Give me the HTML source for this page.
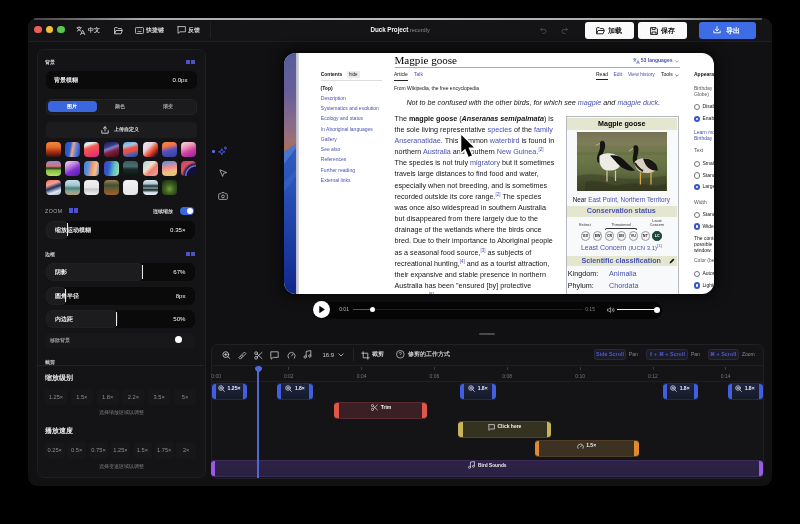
<!DOCTYPE html>
<html><head><meta charset="utf-8">
<style>
*{box-sizing:border-box;margin:0;padding:0}
html,body{width:800px;height:524px;overflow:hidden;background:#000;-webkit-font-smoothing:antialiased;font-family:"Liberation Sans",sans-serif;color:#e8e8ea}
.a{position:absolute}
#win{position:absolute;left:28px;top:18px;width:744px;height:468.3px;border-radius:9px;background:#111113;overflow:hidden}
#hl{position:absolute;left:6px;top:0;width:728px;height:1.5px;background:linear-gradient(90deg,#555 0%,#bbb 20%,#ccc 50%,#bbb 80%,#666 100%)}
#tb{position:absolute;left:0;top:0;width:744px;height:23px;background:#141416;border-bottom:1px solid #202023}
.dot{position:absolute;top:6.5px;width:9px;height:9px;border-radius:50%}
.tbt{position:absolute;top:6px;font-size:6.2px;font-weight:bold;color:#d4d4d8;line-height:10px;white-space:nowrap}
.btn{position:absolute;top:4px;height:16.5px;border-radius:3px;background:#fafafa;color:#111;font-size:7.5px;font-weight:bold;line-height:16.5px;text-align:center}
svg{display:block}
#lp{position:absolute;left:9px;top:31px;width:168px;height:428px;border-radius:9px;background:#151517;border:1px solid #1f1f22}
.lbl{position:absolute;font-size:5.4px;font-weight:bold;color:#d4d4d8;line-height:8px;white-space:nowrap}
.reset{position:absolute;width:9.2px;height:4.3px;background:linear-gradient(90deg,#4a55d0 0,#4a55d0 4px,transparent 4px,transparent 5.1px,#5050c8 5.1px)}
.sl{position:absolute;left:8.5px;width:151px;height:18px;border-radius:6px;background:#0a0a0b;overflow:hidden}
.slf{position:absolute;left:0;top:0;height:100%;background:#1c1c1e;border-radius:6px;box-shadow:inset 0 0 0 0.6px #252528}
.slh{position:absolute;top:2.2px;width:1.1px;height:13.5px;background:#ececec}
.slt{position:absolute;left:8.5px;top:5px;font-size:6.1px;font-weight:bold;color:#ececee;line-height:8px;white-space:nowrap}
.slv{position:absolute;right:9px;top:5px;font-size:6.1px;color:#f4f4f6;line-height:8px}
.tile{position:absolute;width:15px;height:15px;border-radius:4px}
.chip{position:absolute;height:16px;border-radius:3px;background:#171719;font-size:5.7px;color:#8e8e92;line-height:16px;text-align:center}
.w{position:absolute;font-size:5px;line-height:7px;white-space:nowrap}
.l{color:#4852b2}
sup{font-size:4.5px;vertical-align:3px;line-height:0}
.kb{position:absolute;top:349.4px;height:10.3px;border-radius:2.5px;background:#1b1c27;border:0.7px solid #292a36;font-size:5.4px;line-height:8.9px;color:#4d5ad0;font-weight:bold;text-align:center;white-space:nowrap}
.kt{position:absolute;top:350.6px;font-size:5px;line-height:7px;color:#8a8a8e}
</style></head><body><div style="position:absolute;left:0;top:0;width:800px;height:524px;will-change:transform">
<div id="win"></div>
<div class="a" style="left:28px;top:18px;width:744px;height:23px;border-radius:9px 9px 0 0;background:#141416"></div>
<div class="a" style="left:34px;top:18px;width:728px;height:1.5px;background:linear-gradient(90deg,#444 0%,#aaa 15%,#bbb 50%,#aaa 85%,#555 100%)"></div>
<div class="a" style="left:28px;top:40.5px;width:744px;height:1px;background:#1e1e21"></div>
<div class="dot" style="left:34.3px;top:25.5px;width:7.6px;height:7.6px;background:#ec5f5a"></div>
<div class="dot" style="left:45.8px;top:25.5px;width:7.6px;height:7.6px;background:#f3bf3b"></div>
<div class="dot" style="left:57.3px;top:25.5px;width:7.6px;height:7.6px;background:#5bc34f"></div>
<!-- translate icon -->
<svg class="a" style="left:76px;top:25.5px" width="10" height="10" viewBox="76 25.5 10 10" fill="none" stroke="#d4d4d8" stroke-width="0.8" stroke-linecap="round">
<path d="M76.9 27.2h4.4M79.1 26.2v1M77.6 27.9c.6 1.1 1.7 2.1 3.3 2.6M80.6 27.9c-.6 1.1-1.7 2.1-3.3 2.6"/><path d="M80.6 34.2l2.1-4.4 2.1 4.4M81.3 32.8h2.8"/></svg>
<div class="tbt" style="left:88px;top:24.6px">中文</div>
<svg class="a" style="left:113.5px;top:26.5px" width="9" height="8" viewBox="0 0 9 8" fill="none" stroke="#cfcfd3" stroke-width="0.9" stroke-linejoin="round">
<path d="M0.6 6.8V1.2c0-.3.2-.6.6-.6h2l1 1h3c.3 0 .6.2.6.6v1"/><path d="M0.6 6.8l1.4-3.3h6.4l-1.4 3.3z"/></svg>
<svg class="a" style="left:134.5px;top:26.5px" width="9" height="7" viewBox="0 0 9 7" fill="none" stroke="#cfcfd3" stroke-width="0.8">
<rect x="0.5" y="0.5" width="8" height="6" rx="0.8"/><path d="M2 2.2h.4M3.5 2.2h.4M5 2.2h.4M6.5 2.2h.4M2.5 4.6h4"/></svg>
<div class="tbt" style="left:146px;top:24.6px">快捷键</div>
<svg class="a" style="left:176.5px;top:26px" width="9" height="8" viewBox="0 0 9 8" fill="none" stroke="#cfcfd3" stroke-width="0.85" stroke-linejoin="round">
<path d="M0.6 0.6h7.8v5.2H3L1 7.4V0.6z"/></svg>
<div class="tbt" style="left:188px;top:24.6px">反馈</div>
<div class="a" style="left:209.7px;top:22px;width:0.7px;height:16px;background:#222225"></div>
<div class="a" style="left:370.4px;top:25.3px;font-size:6.3px;font-weight:bold;color:#f2f2f4;line-height:10px;letter-spacing:-0.05px">Duck Project<span style="font-weight:normal;color:#8a8a8e;font-size:5.6px;letter-spacing:0px">.recordly</span></div>
<svg class="a" style="left:540px;top:26.5px" width="7" height="7" viewBox="0 0 7 7" fill="none" stroke="#56565a" stroke-width="0.8"><path d="M2.2 0.8L0.6 2.4l1.6 1.6M0.6 2.4h3.4a2 2 0 0 1 0 4h-1.5"/></svg>
<svg class="a" style="left:560.5px;top:26.5px" width="7" height="7" viewBox="0 0 7 7" fill="none" stroke="#56565a" stroke-width="0.8"><path d="M4.8 0.8l1.6 1.6-1.6 1.6M6.4 2.4H3a2 2 0 0 0 0 4h1.5"/></svg>
<div class="btn" style="left:585px;top:22px;width:48.5px"></div>
<svg class="a" style="left:596px;top:26.5px" width="9" height="8" viewBox="0 0 9 8" fill="none" stroke="#111" stroke-width="0.9" stroke-linejoin="round">
<path d="M0.6 6.8V1.2c0-.3.2-.6.6-.6h2l1 1h3c.3 0 .6.2.6.6v1"/><path d="M0.6 6.8l1.4-3.3h6.4l-1.4 3.3z"/></svg>
<div class="a" style="left:608px;top:25.8px;font-size:7px;font-weight:bold;color:#111;line-height:10px">加载</div>
<div class="btn" style="left:637.5px;top:22px;width:49px"></div>
<svg class="a" style="left:649.5px;top:26.5px" width="8" height="8" viewBox="0 0 8 8" fill="none" stroke="#111" stroke-width="0.9" stroke-linejoin="round">
<path d="M0.6 0.6h5.4l1.4 1.4v5.4H0.6z"/><path d="M2.2 0.6v2h3v-2M2 7.4V5h4v2.4"/></svg>
<div class="a" style="left:661px;top:25.8px;font-size:7px;font-weight:bold;color:#111;line-height:10px">保存</div>
<div class="a" style="left:698.5px;top:22px;width:57px;height:16.5px;border-radius:3px;background:#3d6ce4"></div>
<svg class="a" style="left:713px;top:26px" width="8" height="8" viewBox="0 0 8 8" fill="none" stroke="#fff" stroke-width="0.9" stroke-linecap="round" stroke-linejoin="round">
<path d="M4 0.6v4.2M2.3 3.2L4 4.8l1.7-1.6M0.8 5v1.8h6.4V5"/></svg>
<div class="a" style="left:726px;top:25.8px;font-size:7px;font-weight:bold;color:#fff;line-height:10px">导出</div>

<!-- LEFT PANEL -->
<div class="a" style="left:36.5px;top:49px;width:169px;height:429px;border-radius:7px;background:#141416;border:1px solid #1e1e21"></div>
<div class="lbl" style="left:45px;top:58px">背景</div>
<div class="reset" style="left:185.9px;top:59.8px"></div>
<div class="sl" style="left:46px;top:71px;width:150.5px;height:18px"><div class="slt" style="left:8px">背景模糊</div><div class="slv">0.0px</div></div>
<div class="a" style="left:45.5px;top:98.5px;width:151px;height:16px;border-radius:5px;background:#1b1b1e;border:1px solid #232326"></div>
<div class="a" style="left:48px;top:101px;width:48.5px;height:11px;border-radius:4px;background:#3b67de;font-size:5.2px;font-weight:bold;color:#fff;text-align:center;line-height:11px">图片</div>
<div class="a" style="left:98px;top:101px;width:44px;height:11px;font-size:5.2px;font-weight:bold;color:#a9a9ad;text-align:center;line-height:11px">颜色</div>
<div class="a" style="left:144px;top:101px;width:48px;height:11px;font-size:5.2px;font-weight:bold;color:#a9a9ad;text-align:center;line-height:11px">渐变</div>
<div class="a" style="left:45.5px;top:122px;width:151px;height:15.5px;border-radius:4px;background:#1c1c1f"></div>
<svg class="a" style="left:101px;top:125.5px" width="8" height="8" viewBox="0 0 8 8" fill="none" stroke="#e0e0e3" stroke-width="0.85" stroke-linecap="round" stroke-linejoin="round"><path d="M4 5V0.8M2.3 2.4L4 0.8l1.7 1.6M0.8 4.6v2.6h6.4V4.6"/></svg>
<div class="a" style="left:113.5px;top:125.3px;font-size:5.1px;font-weight:bold;color:#e6e6e8;line-height:8px">上传自定义</div>
<div class="tile" style="left:45.5px;top:141.5px;background:linear-gradient(180deg,#f08a40 0%,#e86a28 35%,#a83018 65%,#3a1010 100%)"></div>
<div class="tile" style="left:64.9px;top:141.5px;background:linear-gradient(100deg,#2a50c8 0%,#3060d0 35%,#f0a878 50%,#6080e0 70%,#2040b0 100%)"></div>
<div class="tile" style="left:84.3px;top:141.5px;background:linear-gradient(160deg,#90d0f0 0%,#f0f0f0 18%,#f05a50 38%,#f04060 65%,#d02890 100%)"></div>
<div class="tile" style="left:103.7px;top:141.5px;background:linear-gradient(160deg,#18184a 0%,#3a3a8a 30%,#8080c0 42%,#802040 60%,#400818 100%)"></div>
<div class="tile" style="left:123.1px;top:141.5px;background:linear-gradient(165deg,#60a8e8 0%,#a0c8e8 25%,#f05040 45%,#e05050 60%,#4060b0 80%,#304090 100%)"></div>
<div class="tile" style="left:142.5px;top:141.5px;background:linear-gradient(135deg,#f0e8f0 0%,#e8d0e0 35%,#f06040 55%,#c03020 70%,#101030 92%)"></div>
<div class="tile" style="left:161.9px;top:141.5px;background:linear-gradient(165deg,#f09040 0%,#f07050 30%,#5050c0 55%,#3040a0 100%)"></div>
<div class="tile" style="left:181.3px;top:141.5px;background:linear-gradient(155deg,#f8e0e8 0%,#f0a0c0 30%,#d040a0 60%,#9020a0 100%)"></div>
<div class="tile" style="left:45.5px;top:160.7px;background:linear-gradient(180deg,#8090e8 0%,#e07070 35%,#204020 48%,#80c040 62%,#c0e060 100%)"></div>
<div class="tile" style="left:64.9px;top:160.7px;background:linear-gradient(150deg,#f0e0f0 0%,#c080e0 35%,#8030d0 60%,#5020a0 100%)"></div>
<div class="tile" style="left:84.3px;top:160.7px;background:linear-gradient(100deg,#4080e0 0%,#6090d8 30%,#f0a070 55%,#f0c090 75%,#6080d0 100%)"></div>
<div class="tile" style="left:103.7px;top:160.7px;background:linear-gradient(100deg,#4040c0 0%,#3060d0 35%,#60c0c0 65%,#a0e0b0 100%)"></div>
<div class="tile" style="left:123.1px;top:160.7px;background:linear-gradient(180deg,#3a5a60 0%,#4a7070 35%,#1a2a28 55%,#0a1410 100%)"></div>
<div class="tile" style="left:142.5px;top:160.7px;background:linear-gradient(135deg,#a0d8e0 0%,#f0e0d0 40%,#f08070 60%,#f0a0b0 100%)"></div>
<div class="tile" style="left:161.9px;top:160.7px;background:linear-gradient(170deg,#5090e0 0%,#f09090 45%,#f0c080 70%,#e0c070 100%)"></div>
<div class="tile" style="left:181.3px;top:160.7px;background:radial-gradient(circle at 100% 100%,#10103a 42%,#8080e0 48%,#20205a 54%,#e05060 68%,#c04060 100%)"></div>
<div class="tile" style="left:45.5px;top:179.9px;background:linear-gradient(160deg,#f07860 0%,#f0a090 30%,#203060 50%,#e0e8f0 75%,#a0b0d0 100%)"></div>
<div class="tile" style="left:64.9px;top:179.9px;background:linear-gradient(180deg,#c8e0f0 0%,#a0c8d0 35%,#508080 55%,#80a890 75%,#c0a080 100%)"></div>
<div class="tile" style="left:84.3px;top:179.9px;background:linear-gradient(180deg,#f0f0f2 0%,#e8e8ea 50%,#c8c8cc 60%,#f0f0f2 100%)"></div>
<div class="tile" style="left:103.7px;top:179.9px;background:linear-gradient(180deg,#a08060 0%,#405030 35%,#6a5a30 60%,#a06030 100%)"></div>
<div class="tile" style="left:123.1px;top:179.9px;background:linear-gradient(180deg,#f2f2f4 0%,#e4e4e6 100%)"></div>
<div class="tile" style="left:142.5px;top:179.9px;background:linear-gradient(180deg,#e0e8f0 0%,#b0c8d8 25%,#203030 40%,#80a0a0 55%,#102020 65%,#e0e8f0 85%)"></div>
<div class="tile" style="left:161.9px;top:179.9px;background:radial-gradient(circle at 50% 60%,#70a040 0%,#406020 40%,#1a3010 90%)"></div>

<div class="a" style="left:45px;top:206.5px;font-size:5.2px;color:#a9a9ad;letter-spacing:0.5px;line-height:8px">ZOOM</div>
<div class="reset" style="left:68.5px;top:208.3px"></div>
<div class="lbl" style="left:153px;top:206.5px">连续缩放</div>
<div class="a" style="left:179.5px;top:206.5px;width:14px;height:8px;border-radius:4px;background:#3b67de"></div>
<div class="a" style="left:186.5px;top:207.5px;width:6px;height:6px;border-radius:50%;background:#fff"></div>
<div class="sl" style="left:46px;top:220.5px;width:148.5px;height:18px"><div class="slf" style="width:22.5px"></div><div class="slh" style="left:21px"></div><div class="slt">缩放运动模糊</div><div class="slv">0.35×</div></div>
<div class="lbl" style="left:45px;top:249.5px">边框</div>
<div class="reset" style="left:185.9px;top:251.5px"></div>
<div class="sl" style="left:46px;top:263px;width:148.5px;height:18px"><div class="slf" style="width:97px"></div><div class="slh" style="left:95.9px"></div><div class="slt">阴影</div><div class="slv">67%</div></div>
<div class="sl" style="left:46px;top:286.5px;width:148.5px;height:18px"><div class="slf" style="width:21px"></div><div class="slh" style="left:19px"></div><div class="slt">圆角半径</div><div class="slv">8px</div></div>
<div class="sl" style="left:46px;top:310px;width:148.5px;height:17.5px"><div class="slf" style="width:72px"></div><div class="slh" style="left:70.3px"></div><div class="slt">内边距</div><div class="slv">50%</div></div>
<div class="a" style="left:44.5px;top:332.5px;width:150px;height:15.5px;border-radius:5px;background:#18181a"></div>
<div class="a" style="left:50px;top:336px;font-size:5.2px;font-weight:bold;color:#9a9a9e;line-height:8px">移除背景</div>
<div class="a" style="left:175px;top:336px;width:7px;height:7px;border-radius:50%;background:#fff"></div>
<div class="a" style="left:45px;top:357.5px;font-size:5.4px;font-weight:bold;color:#c4c4c8;line-height:8px">截剪</div>
<div class="a" style="left:37px;top:365px;width:168px;height:1px;background:#232326"></div>
<div class="a" style="left:45px;top:371.5px;font-size:7.2px;font-weight:bold;color:#eaeaec;line-height:11px">缩放级别</div>
<div class="chip" style="left:45.0px;top:389px;width:22px">1.25×</div>
<div class="chip" style="left:70.8px;top:389px;width:22px">1.5×</div>
<div class="chip" style="left:96.6px;top:389px;width:22px">1.8×</div>
<div class="chip" style="left:122.4px;top:389px;width:22px">2.2×</div>
<div class="chip" style="left:148.2px;top:389px;width:22px">3.5×</div>
<div class="chip" style="left:174.0px;top:389px;width:22px">5×</div>

<div class="a" style="left:37px;top:408.3px;width:168px;text-align:center;font-size:5.2px;color:#808084;line-height:8px">选择缩放区域以调整</div>
<div class="a" style="left:45px;top:424.5px;font-size:7.2px;font-weight:bold;color:#eaeaec;line-height:11px">播放速度</div>
<div class="chip" style="left:45.0px;top:441.5px;width:19.5px">0.25×</div>
<div class="chip" style="left:66.9px;top:441.5px;width:19.5px">0.5×</div>
<div class="chip" style="left:88.8px;top:441.5px;width:19.5px">0.75×</div>
<div class="chip" style="left:110.7px;top:441.5px;width:19.5px">1.25×</div>
<div class="chip" style="left:132.6px;top:441.5px;width:19.5px">1.5×</div>
<div class="chip" style="left:154.5px;top:441.5px;width:19.5px">1.75×</div>
<div class="chip" style="left:176.4px;top:441.5px;width:19.5px">2×</div>

<div class="a" style="left:37px;top:461.5px;width:168px;text-align:center;font-size:5.2px;color:#808084;line-height:8px">选择变速区域以调整</div>


<!-- TOOLS -->
<div class="a" style="left:212px;top:150.2px;width:2.5px;height:2.5px;border-radius:50%;background:#5a6ae8"></div>
<svg class="a" style="left:218px;top:146.3px" width="10" height="10" viewBox="0 0 10 10" fill="none" stroke="#4a5ce6" stroke-width="0.85" stroke-linejoin="round"><path d="M3.8 2.6L4.6 5 7 5.8 4.6 6.6 3.8 9 3 6.6 .6 5.8 3 5z"/><path d="M7.4 .6l.35 1.05 1.05.35-1.05.35L7.4 3.4l-.35-1.05L6 2l1.05-.35z"/></svg>
<svg class="a" style="left:218.5px;top:169.3px" width="9" height="8" viewBox="0 0 9 8" fill="none" stroke="#bdbdc1" stroke-width="0.8" stroke-linejoin="round"><path d="M.8 .8L7.8 3.6 4.6 4.4 3.6 7.4z"/></svg>
<svg class="a" style="left:217.8px;top:191.8px" width="10" height="8" viewBox="0 0 10 8" fill="none" stroke="#bdbdc1" stroke-width="0.8" stroke-linejoin="round"><path d="M.7 2.4c0-.4.3-.7.7-.7h1.5L3.8.6h2.4l.9 1.1h1.5c.4 0 .7.3.7.7v4.3c0 .4-.3.7-.7.7H1.4c-.4 0-.7-.3-.7-.7z"/><circle cx="5" cy="4.4" r="1.4"/></svg>
<!-- PREVIEW -->
<div class="a" style="left:284px;top:52.6px;width:430px;height:241.5px;border-radius:12px;overflow:hidden;background:#fff;box-shadow:0 0 12px 4px rgba(0,0,0,0.55)">
<div class="a" style="left:-284px;top:-52.6px;width:800px;height:524px">
<svg class="a" style="left:284px;top:52px" width="12" height="242" viewBox="0 0 12 242">
<defs><linearGradient id="g1" x1="0" y1="0" x2="0" y2="1"><stop offset="0" stop-color="#565c9e"/><stop offset="0.4" stop-color="#685e98"/><stop offset="0.7" stop-color="#866a8a"/><stop offset="0.88" stop-color="#9c7074"/><stop offset="1" stop-color="#ac6e50"/></linearGradient>
<linearGradient id="g2" x1="0" y1="0" x2="0" y2="1"><stop offset="0" stop-color="#3d74d6"/><stop offset="0.25" stop-color="#3466cc"/><stop offset="0.55" stop-color="#2a52b8"/><stop offset="1" stop-color="#10288c"/></linearGradient></defs>
<rect width="12" height="242" fill="url(#g2)"/>
<path d="M0 0H12V92L0 100z" fill="url(#g1)"/>
<path d="M0 100L12 92V96L0 112z" fill="#5a88d8" opacity="0.6"/><path d="M0 130L12 118V124L0 140z" fill="#3a6ac8" opacity="0.5"/>
</svg>
<div class="a" style="left:295.7px;top:52px;width:3px;height:242px;background:linear-gradient(90deg,#b8b8c4,#dcdce4)"></div>
<div class="w" style="left:320.7px;top:70.5px;font-weight:bold;color:#141516">Contents</div>
<div class="a" style="left:347px;top:70.7px;width:13px;height:7.3px;background:#eaecf0;border-radius:1px"></div>
<div class="w" style="left:349px;top:70.5px;color:#141516;font-size:4.5px">hide</div>
<div class="a" style="left:321px;top:80px;width:60.5px;height:0.6px;background:#dcdde0"></div>
<div class="w" style="left:320.5px;top:84.6px;font-weight:bold;color:#141516">(Top)</div>
<div class="w" style="left:320.8px;top:94.8px;color:#4852b2">Description</div>
<div class="w" style="left:320.8px;top:105.0px;color:#4852b2">Systematics and evolution</div>
<div class="w" style="left:320.8px;top:115.2px;color:#4852b2">Ecology and status</div>
<div class="w" style="left:320.8px;top:125.7px;color:#4852b2">In Aboriginal languages</div>
<div class="w" style="left:320.8px;top:135.9px;color:#4852b2">Gallery</div>
<div class="w" style="left:320.8px;top:146.1px;color:#4852b2">See also</div>
<div class="w" style="left:320.8px;top:156.3px;color:#4852b2">References</div>
<div class="w" style="left:320.8px;top:166.5px;color:#4852b2">Further reading</div>
<div class="w" style="left:320.8px;top:176.7px;color:#4852b2">External links</div>

<div class="a" style="left:394.5px;top:53.5px;font-family:'Liberation Serif',serif;font-size:11.1px;line-height:13px;color:#000;white-space:nowrap">Magpie goose</div>
<div class="a" style="left:394.5px;top:67px;width:285px;height:0.7px;background:#a2a9b1"></div>
<svg class="a" style="left:632.5px;top:58px" width="7" height="6" viewBox="0 0 7 6" fill="none" stroke="#4852b2" stroke-width="0.6"><path d="M0.3 1h3M1.8 .2v.8M.8 1c.3 1.2 1 2 2.3 2.4M2.8 1c-.3 1.2-1 2-2.3 2.4M3.5 5.8l1.5-3.3 1.5 3.3M4 4.8h2"/></svg>
<div class="w" style="left:640.8px;top:57.3px;font-weight:bold;color:#4852b2">53 languages</div>
<svg class="a" style="left:675px;top:59.5px" width="4" height="3" viewBox="0 0 4 3" fill="none" stroke="#4852b2" stroke-width="0.6"><path d="M.4 .6L2 2.2 3.6 .6"/></svg>
<div class="w" style="left:394px;top:71.3px;color:#141516">Article</div>
<div class="a" style="left:394px;top:79.7px;width:14px;height:1px;background:#202122"></div>
<div class="w" style="left:414px;top:71.3px;color:#4852b2">Talk</div>
<div class="w" style="left:596px;top:71.2px;color:#141516">Read</div>
<div class="a" style="left:596px;top:79.3px;width:12px;height:1px;background:#202122"></div>
<div class="w" style="left:613.5px;top:71.2px;color:#4852b2">Edit</div>
<div class="w" style="left:628px;top:71.2px;color:#4852b2">View history</div>
<div class="w" style="left:661px;top:71.2px;color:#141516">Tools</div>
<svg class="a" style="left:675px;top:73.5px" width="4" height="3" viewBox="0 0 4 3" fill="none" stroke="#202122" stroke-width="0.6"><path d="M.4 .6L2 2.2 3.6 .6"/></svg>
<div class="w" style="left:394px;top:84.8px;color:#141516">From Wikipedia, the free encyclopedia</div>
<div class="a" style="left:406.4px;top:98.3px;font-size:7.2px;line-height:10px;font-style:italic;color:#141516;white-space:nowrap">Not to be confused with the other birds, for which see <span style="color:#4852b2">magpie</span> and <span style="color:#4852b2">magpie duck</span>.</div>
<div class="a" style="left:394.5px;top:112.7px;font-size:7.2px;line-height:11.15px;color:#141516;white-space:nowrap">
The <b>magpie goose</b> (<b><i>Anseranas semipalmata</i></b>) is<br>
the sole living representative <span class="l">species</span> of the <span class="l">family</span><br>
<span class="l">Anseranatidae</span>. This common <span class="l">waterbird</span> is found in<br>
northern <span class="l">Australia</span> and southern <span class="l">New Guinea</span>.<sup class="l">[2]</sup><br>
The species is not truly <span class="l">migratory</span> but it sometimes<br>
travels large distances to find food and water,<br>
especially when not breeding, and is sometimes<br>
recorded outside its core range.<sup class="l">[2]</sup> The species<br>
was once also widespread in southern Australia<br>
but disappeared from there largely due to the<br>
drainage of the wetlands where the birds once<br>
bred. Due to their importance to Aboriginal people<br>
as a seasonal food source,<sup class="l">[3]</sup> as subjects of<br>
recreational hunting,<sup class="l">[4]</sup> and as a tourist attraction,<br>
their expansive and stable presence in northern<br>
Australia has been "ensured [by] protective<br>
legislation"<sup class="l">[5]</sup>
</div>
<!-- infobox -->
<div class="a" style="left:565.5px;top:116.4px;width:113px;height:190px;background:#f8f9fa;border:0.7px solid #b4b9c0"></div>
<div class="a" style="left:567px;top:117.8px;width:109.5px;height:12.2px;background:#e5e6cf"></div>
<div class="a" style="left:567px;top:119.3px;width:109.5px;text-align:center;font-size:7.1px;font-weight:bold;color:#000;line-height:10px">Magpie goose</div>
<div class="a" style="left:577.3px;top:131.7px;width:89.5px;height:59.4px;background:linear-gradient(180deg,#757254 0%,#7c7a58 12%,#74784e 30%,#6a7646 50%,#606c40 68%,#4e5634 85%,#3e4428 100%);overflow:hidden">
<svg width="89.5" height="59.4" viewBox="0 0 89.5 59.4">
<rect x="0" y="10" width="89.5" height="4" fill="#86805e" opacity="0.5"/>
<rect x="0" y="20" width="89.5" height="3" fill="#5e6a40" opacity="0.4"/>
<path d="M0 44c10-3 25-2 35 1s30 2 54-1v15.4H0z" fill="#3c4226" opacity="0.55"/>
<path d="M8 50c6-2 14-1 20 1s10 3 16 2 14-3 22-1 14 2 23 0v7.4H8z" fill="#30331e" opacity="0.6"/>
<path d="M18.7 13.4L23 11.5" stroke="#c8b080" stroke-width="1"/>
<path d="M23 10.5c1.2-2.5 4-2.3 4.8.3 .8 3 .2 6-1.2 9-1.5 3.5-2.5 6-1.8 8.5l-3.6 3c-1.8-3-1.5-7 .3-10.5 1.3-2.6 1.8-5 1.5-10.3z" fill="#151515"/>
<path d="M22.5 24c3-3 9-3.5 14-2 5 1.5 8 5 7 10.5-1 4.5-7 6.5-13 6-5-.5-9-4.5-8-14.5z" fill="#ecece4"/>
<path d="M33 23.5c5-1 10 .5 14 4.5 4 4 8 7.5 11.2 10.7-4.5.6-9-.5-13-3-3.5-2-6-6-12.2-12.2z" fill="#121212"/>
<path d="M30 38.5v11M38.5 38.5v10.5" stroke="#d8c8a0" stroke-width="1.2"/>
<path d="M52 19.4L56.5 16" stroke="#c8b080" stroke-width="1"/>
<path d="M56.3 15c1-2.3 4-2.3 4.8 0 .7 2.5 .3 5-.5 8-.7 3-.8 5-.3 7.5l-3.5 1.5c-1.3-3-1.3-6-.5-9.5 .6-2.5 .5-4.7 0-7.5z" fill="#151515"/>
<path d="M57.5 30c2-3.5 8-4.5 13-3.5 5 1 8.5 4 9 8.5.5 4-4 6-10 6-6 0-12-3-12-11z" fill="#d8d0c0"/>
<path d="M66 26.5c5-.5 10 1.5 12.5 5 1.5 2 2 4.5 2.5 7-3.5.5-7-.5-9.5-2.5-2.5-2-4-5-5.5-9.5z" fill="#1a1714"/>
<path d="M58 31c1.5 3 4 6 8 8" stroke="#2a2420" stroke-width="2"/>
<path d="M63.4 40.5v12M74 40v12.5" stroke="#e0a848" stroke-width="1.3"/>
</svg></div>
<div class="a" style="left:567px;top:194.5px;width:108.5px;text-align:center;font-size:6.35px;color:#141516;line-height:9px;white-space:nowrap">Near <span class="l">East Point, Northern Territory</span></div>
<div class="a" style="left:567px;top:206px;width:109.5px;height:10.6px;background:#e5e6cf"></div>
<div class="a" style="left:567px;top:206.3px;width:108.5px;text-align:center;font-size:7.2px;font-weight:bold;color:#4852b2;line-height:10px">Conservation status</div>
<div class="a" style="left:581.0px;top:231.4px;width:9.4px;height:9.4px;border-radius:50%;background:#f4f4f4;border:0.6px solid #9a9a9a;color:#222;font-weight:bold;font-size:3.6px;line-height:8.2px;text-align:center">EX</div>
<div class="a" style="left:592.9px;top:231.4px;width:9.4px;height:9.4px;border-radius:50%;background:#f4f4f4;border:0.6px solid #9a9a9a;color:#222;font-weight:bold;font-size:3.6px;line-height:8.2px;text-align:center">EW</div>
<div class="a" style="left:604.8px;top:231.4px;width:9.4px;height:9.4px;border-radius:50%;background:#f4f4f4;border:0.6px solid #9a9a9a;color:#222;font-weight:bold;font-size:3.6px;line-height:8.2px;text-align:center">CR</div>
<div class="a" style="left:616.7px;top:231.4px;width:9.4px;height:9.4px;border-radius:50%;background:#f4f4f4;border:0.6px solid #9a9a9a;color:#222;font-weight:bold;font-size:3.6px;line-height:8.2px;text-align:center">EN</div>
<div class="a" style="left:628.6px;top:231.4px;width:9.4px;height:9.4px;border-radius:50%;background:#f4f4f4;border:0.6px solid #9a9a9a;color:#222;font-weight:bold;font-size:3.6px;line-height:8.2px;text-align:center">VU</div>
<div class="a" style="left:640.5px;top:231.4px;width:9.4px;height:9.4px;border-radius:50%;background:#f4f4f4;border:0.6px solid #9a9a9a;color:#222;font-weight:bold;font-size:3.6px;line-height:8.2px;text-align:center">NT</div>
<div class="a" style="left:652.4px;top:231.4px;width:9.4px;height:9.4px;border-radius:50%;background:#1e4a40;border:0.6px solid #0a3a30;color:#fff;font-weight:bold;font-size:3.6px;line-height:8.2px;text-align:center">LC</div>
<div class="a" style="left:575px;top:222.5px;width:20px;text-align:center;font-size:3.8px;color:#333;line-height:4px">Extinct</div><div class="a" style="left:605px;top:222.5px;width:32px;text-align:center;font-size:3.8px;color:#333;line-height:4px">Threatened</div><div class="a" style="left:647px;top:220px;width:20px;text-align:center;font-size:3.8px;color:#333;line-height:3.8px">Least<br>Concern</div><div class="a" style="left:605px;top:227.5px;width:32px;height:2px;border:0.6px solid #333;border-bottom:none;border-radius:2px 2px 0 0"></div>
<div class="a" style="left:567px;top:243px;width:108.5px;text-align:center;font-size:7px;color:#4852b2;line-height:10px;white-space:nowrap">Least Concern <span style="font-size:6px">(IUCN 3.1)</span><sup style="font-size:4px">[1]</sup></div>
<div class="a" style="left:567px;top:255.7px;width:109.5px;height:10.7px;background:#e5e6cf"></div>
<div class="a" style="left:567px;top:256px;width:108.5px;text-align:center;font-size:7.2px;font-weight:bold;color:#4852b2;line-height:10px;padding-right:0px">Scientific classification</div>
<svg class="a" style="left:668.5px;top:257.5px" width="6" height="6" viewBox="0 0 6 6"><path d="M.6 5.4l.4-1.6 3.2-3.2 1.2 1.2-3.2 3.2z" fill="#111"/></svg>
<div class="a" style="left:567.8px;top:268.6px;font-size:7.2px;color:#141516;line-height:10px">Kingdom:</div>
<div class="a" style="left:609px;top:268.6px;font-size:7.2px;color:#4852b2;line-height:10px">Animalia</div>
<div class="a" style="left:567.8px;top:280.7px;font-size:7.2px;color:#141516;line-height:10px">Phylum:</div>
<div class="a" style="left:609px;top:280.7px;font-size:7.2px;color:#4852b2;line-height:10px">Chordata</div>
<div class="w" style="left:694px;top:70.5px;font-weight:bold;color:#141516">Appearance</div>
<div class="a" style="left:694px;top:84.5px;font-size:5px;line-height:6px;color:#54595d">Birthday<br>Globe)</div>
<div class="a" style="left:694px;top:129px;font-size:5px;line-height:6px;color:#4852b2">Learn more<br>Birthday</div>
<div class="w" style="left:694px;top:146.5px;color:#54595d">Text</div>
<div class="w" style="left:694px;top:198.5px;color:#54595d">Width</div>
<div class="a" style="left:694px;top:235px;font-size:5px;line-height:6px;color:#141516">The content<br>possible<br>window.</div>
<div class="w" style="left:694px;top:256.5px;color:#54595d">Color (beta)</div>
<div class="a" style="left:694px;top:103.8px;width:6.4px;height:6.4px;border-radius:50%;border:0.7px solid #72777d;background:#fff"></div><div class="w" style="left:702.5px;top:103.4px;color:#141516">Disabled</div><div class="a" style="left:694px;top:115.8px;width:6.4px;height:6.4px;border-radius:50%;border:2.1px solid #3a56c8;background:#fff"></div><div class="w" style="left:702.5px;top:115.4px;color:#141516">Enabled</div><div class="a" style="left:694px;top:160.8px;width:6.4px;height:6.4px;border-radius:50%;border:0.7px solid #72777d;background:#fff"></div><div class="w" style="left:702.5px;top:160.4px;color:#141516">Small</div><div class="a" style="left:694px;top:172.3px;width:6.4px;height:6.4px;border-radius:50%;border:0.7px solid #72777d;background:#fff"></div><div class="w" style="left:702.5px;top:171.9px;color:#141516">Standard</div><div class="a" style="left:694px;top:183.8px;width:6.4px;height:6.4px;border-radius:50%;border:2.1px solid #3a56c8;background:#fff"></div><div class="w" style="left:702.5px;top:183.4px;color:#141516">Large</div><div class="a" style="left:694px;top:211.8px;width:6.4px;height:6.4px;border-radius:50%;border:0.7px solid #72777d;background:#fff"></div><div class="w" style="left:702.5px;top:211.4px;color:#141516">Standard</div><div class="a" style="left:694px;top:223.3px;width:6.4px;height:6.4px;border-radius:50%;border:2.1px solid #3a56c8;background:#fff"></div><div class="w" style="left:702.5px;top:222.9px;color:#141516">Wide</div><div class="a" style="left:694px;top:270.8px;width:6.4px;height:6.4px;border-radius:50%;border:0.7px solid #72777d;background:#fff"></div><div class="w" style="left:702.5px;top:270.4px;color:#141516">Automatic</div><div class="a" style="left:694px;top:282.3px;width:6.4px;height:6.4px;border-radius:50%;border:2.1px solid #3a56c8;background:#fff"></div><div class="w" style="left:702.5px;top:281.9px;color:#141516">Light</div>
<svg class="a" style="left:457px;top:131px" width="21" height="30" viewBox="457 131 21 30"><path d="M461.3 134.9L461.3 152.3L465.2 148.7L468.6 156.8L471.9 155.4L468.5 147.6L474 147.6Z" fill="#000" stroke="#fff" stroke-width="2.6" stroke-linejoin="round" paint-order="stroke"/></svg>
</div></div>

<!-- PLAYER -->
<div class="a" style="left:311.5px;top:301.5px;width:350.5px;height:17px;border-radius:8.5px;background:#050505"></div>
<div class="a" style="left:313.3px;top:301.3px;width:16.8px;height:16.8px;border-radius:50%;background:#fff"></div>
<svg class="a" style="left:317px;top:305px" width="9" height="9" viewBox="0 0 9 9"><path d="M2.6 1.3L7.4 4.5 2.6 7.7z" fill="#000" stroke="#000" stroke-width="0.6" stroke-linejoin="round"/></svg>
<div class="a" style="left:339.2px;top:306px;font-size:5px;line-height:7px;color:#bdbdc0">0:01</div>
<div class="a" style="left:352.7px;top:309px;width:230px;height:1px;background:#1e1e20"></div>
<div class="a" style="left:352.7px;top:308.8px;width:20px;height:1.3px;background:#3a4fc0"></div>
<div class="a" style="left:369.6px;top:306.7px;width:5.6px;height:5.6px;border-radius:50%;background:#fff"></div>
<div class="a" style="left:585.2px;top:306px;font-size:5px;line-height:7px;color:#7d7d80">0:15</div>
<svg class="a" style="left:606.5px;top:306.5px" width="8" height="6" viewBox="0 0 8 6" fill="none" stroke="#bdbdc0" stroke-width="0.7"><path d="M.5 2h1.3L3.6.6v4.8L1.8 4H.5z"/><path d="M5 1.6c.6.8.6 2 0 2.8M6.2 .8c1.1 1.3 1.1 3.1 0 4.4"/></svg>
<div class="a" style="left:617px;top:309px;width:40px;height:1.2px;background:#f0f0f0"></div>
<div class="a" style="left:653.9px;top:306.5px;width:6px;height:6px;border-radius:50%;background:#fff"></div>
<div class="a" style="left:478.7px;top:333px;width:16.5px;height:1.6px;border-radius:1px;background:#4a4a4d"></div>

<!-- TIMELINE -->
<div class="a" style="left:210.5px;top:343.5px;width:553px;height:135px;border-radius:7px;background:#141416;border:1px solid #212124"></div>
<svg class="a" style="left:221.5px;top:351px" width="9" height="8" viewBox="0 0 9 8" fill="none" stroke="#c9c9cd" stroke-width="0.85" stroke-linecap="round"><circle cx="3.8" cy="3.6" r="2.9"/><path d="M5.9 5.7L7.8 7.4M3.8 2.4v2.4M2.6 3.6h2.4"/></svg>
<svg class="a" style="left:237.5px;top:350.5px" width="9" height="9" viewBox="0 0 9 9" fill="none" stroke="#c9c9cd" stroke-width="0.8" stroke-linejoin="round"><path d="M.9 6.6L6.4 1.1 7.9 2.6 2.4 8.1z"/><path d="M3.6 3.9l1.5 1.5M2.3 5.2l1.5 1.5"/></svg>
<svg class="a" style="left:254px;top:350.5px" width="9" height="9" viewBox="0 0 9 9" fill="none" stroke="#c9c9cd" stroke-width="0.8" stroke-linecap="round"><circle cx="2.1" cy="2.2" r="1.4"/><circle cx="2.1" cy="6.8" r="1.4"/><path d="M3.2 3.1L8 7.6M3.2 5.9L8 1.4"/></svg>
<svg class="a" style="left:270.3px;top:350.5px" width="9" height="9" viewBox="0 0 9 9" fill="none" stroke="#c9c9cd" stroke-width="0.8" stroke-linejoin="round"><path d="M.8 .8h7.4v5.6H3.2L1.2 8.2V6.4H.8z"/></svg>
<svg class="a" style="left:286.5px;top:350.5px" width="9" height="9" viewBox="0 0 9 9" fill="none" stroke="#c9c9cd" stroke-width="0.8" stroke-linecap="round"><path d="M1.6 7.2A3.6 3.6 0 1 1 7.4 7.2M4.5 5l1.6-1.8"/></svg>
<svg class="a" style="left:302.8px;top:349.8px" width="9" height="9" viewBox="0 0 9 9" fill="none" stroke="#c9c9cd" stroke-width="0.8"><path d="M3.2 6.8V1.4l4.6-.8v5.2"/><circle cx="2.2" cy="6.9" r="1.2"/><circle cx="6.8" cy="6" r="1.2"/></svg>
<div class="a" style="left:322.5px;top:350.5px;font-size:6px;line-height:8px;color:#c9c9cd">16:9</div>
<svg class="a" style="left:337.5px;top:352.5px" width="6" height="4" viewBox="0 0 6 4" fill="none" stroke="#c9c9cd" stroke-width="0.8"><path d="M.6 .6L3 3l2.4-2.4"/></svg>
<div class="a" style="left:352.5px;top:348px;width:0.8px;height:13px;background:#242427"></div>
<svg class="a" style="left:361px;top:350.5px" width="9" height="9" viewBox="0 0 9 9" fill="none" stroke="#c9c9cd" stroke-width="0.85"><path d="M2.2 .4v6.4h6.4M.4 2.2h6.4v6.4"/></svg>
<div class="a" style="left:371.5px;top:350.3px;font-size:6px;font-weight:bold;line-height:8px;color:#c9c9cd">截剪</div>
<svg class="a" style="left:396px;top:350.2px" width="9" height="9" viewBox="0 0 9 9" fill="none" stroke="#c9c9cd" stroke-width="0.75"><circle cx="4.3" cy="4.3" r="3.8"/><path d="M3.2 3.4c0-.7.5-1.2 1.1-1.2s1.1.5 1.1 1.1c0 .8-1.1.9-1.1 1.7M4.3 6.1v.3"/></svg>
<div class="a" style="left:407.5px;top:350.3px;font-size:6px;font-weight:bold;line-height:8px;color:#c9c9cd">修剪的工作方式</div>
<div class="kb" style="left:593.8px;width:32.5px">Side Scroll</div>
<div class="kt" style="left:628.8px">Pan</div>
<div class="kb" style="left:645.5px;width:42.5px">⇧ + ⌘ + Scroll</div>
<div class="kt" style="left:691px">Pan</div>
<div class="kb" style="left:707.5px;width:31.3px">⌘ + Scroll</div>
<div class="kt" style="left:742px">Zoom</div>
<div class="a" style="left:211px;top:365px;width:552px;height:0.8px;background:#1f1f22"></div>
<div class="a" style="left:211px;top:381px;width:552px;height:0.8px;background:#1f1f22"></div>
<div class="a" style="left:211.3px;top:372.8px;font-size:5px;line-height:7px;color:#76767a">0:00</div>
<div class="a" style="left:288.4px;top:366.5px;width:0.8px;height:3.5px;background:#3a3a3e"></div><div class="a" style="left:273.8px;top:372.8px;width:30px;text-align:center;font-size:5px;line-height:7px;color:#76767a">0:02</div>
<div class="a" style="left:361.2px;top:366.5px;width:0.8px;height:3.5px;background:#3a3a3e"></div><div class="a" style="left:346.6px;top:372.8px;width:30px;text-align:center;font-size:5px;line-height:7px;color:#76767a">0:04</div>
<div class="a" style="left:434.0px;top:366.5px;width:0.8px;height:3.5px;background:#3a3a3e"></div><div class="a" style="left:419.4px;top:372.8px;width:30px;text-align:center;font-size:5px;line-height:7px;color:#76767a">0:06</div>
<div class="a" style="left:506.8px;top:366.5px;width:0.8px;height:3.5px;background:#3a3a3e"></div><div class="a" style="left:492.2px;top:372.8px;width:30px;text-align:center;font-size:5px;line-height:7px;color:#76767a">0:08</div>
<div class="a" style="left:579.7px;top:366.5px;width:0.8px;height:3.5px;background:#3a3a3e"></div><div class="a" style="left:565.1px;top:372.8px;width:30px;text-align:center;font-size:5px;line-height:7px;color:#76767a">0:10</div>
<div class="a" style="left:652.5px;top:366.5px;width:0.8px;height:3.5px;background:#3a3a3e"></div><div class="a" style="left:637.9px;top:372.8px;width:30px;text-align:center;font-size:5px;line-height:7px;color:#76767a">0:12</div>
<div class="a" style="left:725.3px;top:366.5px;width:0.8px;height:3.5px;background:#3a3a3e"></div><div class="a" style="left:710.7px;top:372.8px;width:30px;text-align:center;font-size:5px;line-height:7px;color:#76767a">0:14</div>

<div class="a" style="left:211.9px;top:383.25px;width:35.1px;height:16.85px;border-radius:3px;background:linear-gradient(180deg,#1c2440,#161b2a);border-top:0.6px solid #222a48;border-bottom:0.6px solid #222a48;overflow:hidden"><div class="a" style="left:0;top:0;width:4px;height:100%;background:#4060e0;border-radius:3px 0 0 3px"></div><div class="a" style="right:0;top:0;width:4px;height:100%;background:#4060e0;border-radius:0 3px 3px 0"></div></div><svg class="a" style="left:217.6px;top:384.8px" width="7" height="7" viewBox="0 0 7 7" fill="none" stroke="#e8e8ec" stroke-width="0.7" stroke-linecap="round"><circle cx="3" cy="3" r="2.3"/><path d="M4.7 4.7L6.4 6.4M3 2v2M2 3h2"/></svg><div class="a" style="left:227.6px;top:384.5px;font-size:5.1px;font-weight:bold;line-height:7px;color:#f0f0f4;white-space:nowrap">1.25×</div><div class="a" style="left:277.1px;top:383.25px;width:36.30px;height:16.85px;border-radius:3px;background:linear-gradient(180deg,#1c2440,#161b2a);border-top:0.6px solid #222a48;border-bottom:0.6px solid #222a48;overflow:hidden"><div class="a" style="left:0;top:0;width:4px;height:100%;background:#4060e0;border-radius:3px 0 0 3px"></div><div class="a" style="right:0;top:0;width:4px;height:100%;background:#4060e0;border-radius:0 3px 3px 0"></div></div><svg class="a" style="left:285.2px;top:384.8px" width="7" height="7" viewBox="0 0 7 7" fill="none" stroke="#e8e8ec" stroke-width="0.7" stroke-linecap="round"><circle cx="3" cy="3" r="2.3"/><path d="M4.7 4.7L6.4 6.4M3 2v2M2 3h2"/></svg><div class="a" style="left:294.9px;top:384.5px;font-size:5px;font-weight:bold;line-height:7px;color:#f0f0f4;white-space:nowrap">1.8×</div><div class="a" style="left:460px;top:383.25px;width:36.00px;height:16.85px;border-radius:3px;background:linear-gradient(180deg,#1c2440,#161b2a);border-top:0.6px solid #222a48;border-bottom:0.6px solid #222a48;overflow:hidden"><div class="a" style="left:0;top:0;width:4px;height:100%;background:#4060e0;border-radius:3px 0 0 3px"></div><div class="a" style="right:0;top:0;width:4px;height:100%;background:#4060e0;border-radius:0 3px 3px 0"></div></div><svg class="a" style="left:468.0px;top:384.8px" width="7" height="7" viewBox="0 0 7 7" fill="none" stroke="#e8e8ec" stroke-width="0.7" stroke-linecap="round"><circle cx="3" cy="3" r="2.3"/><path d="M4.7 4.7L6.4 6.4M3 2v2M2 3h2"/></svg><div class="a" style="left:477.7px;top:384.5px;font-size:5px;font-weight:bold;line-height:7px;color:#f0f0f4;white-space:nowrap">1.8×</div><div class="a" style="left:662.5px;top:383.25px;width:35.00px;height:16.85px;border-radius:3px;background:linear-gradient(180deg,#1c2440,#161b2a);border-top:0.6px solid #222a48;border-bottom:0.6px solid #222a48;overflow:hidden"><div class="a" style="left:0;top:0;width:4px;height:100%;background:#4060e0;border-radius:3px 0 0 3px"></div><div class="a" style="right:0;top:0;width:4px;height:100%;background:#4060e0;border-radius:0 3px 3px 0"></div></div><svg class="a" style="left:670.0px;top:384.8px" width="7" height="7" viewBox="0 0 7 7" fill="none" stroke="#e8e8ec" stroke-width="0.7" stroke-linecap="round"><circle cx="3" cy="3" r="2.3"/><path d="M4.7 4.7L6.4 6.4M3 2v2M2 3h2"/></svg><div class="a" style="left:679.7px;top:384.5px;font-size:5px;font-weight:bold;line-height:7px;color:#f0f0f4;white-space:nowrap">1.8×</div><div class="a" style="left:727.5px;top:383.25px;width:35.00px;height:16.85px;border-radius:3px;background:linear-gradient(180deg,#1c2440,#161b2a);border-top:0.6px solid #222a48;border-bottom:0.6px solid #222a48;overflow:hidden"><div class="a" style="left:0;top:0;width:4px;height:100%;background:#4060e0;border-radius:3px 0 0 3px"></div><div class="a" style="right:0;top:0;width:4px;height:100%;background:#4060e0;border-radius:0 3px 3px 0"></div></div><svg class="a" style="left:735.0px;top:384.8px" width="7" height="7" viewBox="0 0 7 7" fill="none" stroke="#e8e8ec" stroke-width="0.7" stroke-linecap="round"><circle cx="3" cy="3" r="2.3"/><path d="M4.7 4.7L6.4 6.4M3 2v2M2 3h2"/></svg><div class="a" style="left:744.7px;top:384.5px;font-size:5px;font-weight:bold;line-height:7px;color:#f0f0f4;white-space:nowrap">1.8×</div><div class="a" style="left:333.9px;top:402.1px;width:93.10px;height:16.80px;border-radius:3px;background:#3a1f25;border-top:0.6px solid #5a2a32;border-bottom:0.6px solid #5a2a32;overflow:hidden"><div class="a" style="left:0;top:0;width:4.8px;height:100%;background:#e0574a;border-radius:3px 0 0 3px"></div><div class="a" style="right:0;top:0;width:4.8px;height:100%;background:#e0574a;border-radius:0 3px 3px 0"></div></div><svg class="a" style="left:370.5px;top:404px" width="7" height="7" viewBox="0 0 7 7" fill="none" stroke="#e8e8ec" stroke-width="0.7"><circle cx="1.5" cy="1.6" r="1.1"/><circle cx="1.5" cy="5.4" r="1.1"/><path d="M2.4 2.3L6.6 6.2M2.4 4.7L6.6 .8"/></svg><div class="a" style="left:380.7px;top:404.2px;font-size:5px;font-weight:bold;line-height:7px;color:#f0f0f4">Trim</div><div class="a" style="left:458px;top:420.75px;width:93.25px;height:17.25px;border-radius:3px;background:#35331f;border-top:0.6px solid #4a4628;border-bottom:0.6px solid #4a4628;overflow:hidden"><div class="a" style="left:0;top:0;width:4.5px;height:100%;background:#c8b45a;border-radius:3px 0 0 3px"></div><div class="a" style="right:0;top:0;width:4.5px;height:100%;background:#c8b45a;border-radius:0 3px 3px 0"></div></div><svg class="a" style="left:487.5px;top:423.5px" width="7" height="7" viewBox="0 0 7 7" fill="none" stroke="#e8e8ec" stroke-width="0.7" stroke-linejoin="round"><path d="M.6 .6h5.8v4.4H2.4L.9 6.4V.6z"/></svg><div class="a" style="left:497.5px;top:423.3px;font-size:5px;font-weight:bold;line-height:7px;color:#f0f0f4">Click here</div><div class="a" style="left:534.5px;top:440px;width:104.25px;height:17.00px;border-radius:3px;background:#3d3122;border-top:0.6px solid #4f3e28;border-bottom:0.6px solid #4f3e28;overflow:hidden"><div class="a" style="left:0;top:0;width:4.5px;height:100%;background:#e08a30;border-radius:3px 0 0 3px"></div><div class="a" style="right:0;top:0;width:4.5px;height:100%;background:#e08a30;border-radius:0 3px 3px 0"></div></div><svg class="a" style="left:576.5px;top:442.8px" width="7" height="6" viewBox="0 0 7 6" fill="none" stroke="#e8e8ec" stroke-width="0.7" stroke-linecap="round"><path d="M1 5.4A2.9 2.9 0 1 1 6 5.4M3.5 3.8l1.2-1.3"/></svg><div class="a" style="left:586.2px;top:442px;font-size:5px;font-weight:bold;line-height:7px;color:#f0f0f4">1.5×</div><div class="a" style="left:211.25px;top:459.5px;width:551.25px;height:17.50px;border-radius:3px;background:linear-gradient(180deg,#2e2347,#2a2040);border-top:0.6px solid #3a2c58;border-bottom:0.6px solid #3a2c58;overflow:hidden"><div class="a" style="left:0;top:0;width:4px;height:100%;background:#9a5ae8;border-radius:3px 0 0 3px"></div><div class="a" style="right:0;top:0;width:4px;height:100%;background:#9a5ae8;border-radius:0 3px 3px 0"></div></div><svg class="a" style="left:468px;top:461px" width="7" height="8" viewBox="0 0 7 8" fill="none" stroke="#e8e8ec" stroke-width="0.7"><path d="M2.4 6.2V1.2l4-.7v4.6"/><circle cx="1.5" cy="6.3" r="1"/><circle cx="5.4" cy="5.3" r="1"/></svg><div class="a" style="left:478px;top:461.5px;font-size:4.8px;font-weight:bold;line-height:7px;color:#e8e8ec">Bird Sounds</div>
<div class="a" style="left:257.3px;top:369px;width:1.3px;height:108.5px;background:#5068d4"></div>
<svg class="a" style="left:254.6px;top:365.8px" width="7.2" height="6.6" viewBox="0 0 7.2 6.6"><path d="M3.6 6.6C2.2 5.6 0 4.2 0 2.5 0 1 1.4 0 3.6 0S7.2 1 7.2 2.5C7.2 4.2 5 5.6 3.6 6.6z" fill="#5068d8"/></svg>
</div></body></html>
